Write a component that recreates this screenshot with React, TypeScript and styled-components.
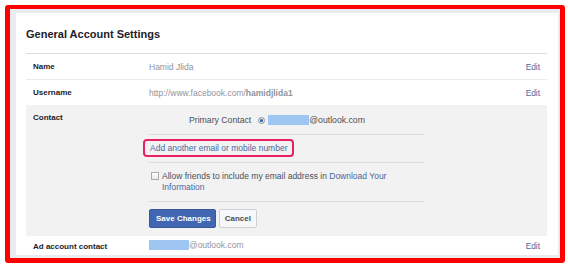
import styled, { createGlobalStyle } from "styled-components"

const GlobalStyle = createGlobalStyle`
  html, body {
    margin: 0;
    padding: 0;
    background: #ffffff;
    font-family: "Liberation Sans", Arial, sans-serif;
  }
`

export default function App() {
  return (
    <>
      <GlobalStyle />
      <Frame>
        <Panel>
          <Title>General Account Settings</Title>

          <Row $border>
            <Label>Name</Label>
            <Value>Hamid Jlida</Value>
            <EditLink>Edit</EditLink>
          </Row>

          <Row>
            <Label>Username</Label>
            <Value>
              http://www.facebook.com/<strong>hamidjlida1</strong>
            </Value>
            <EditLink>Edit</EditLink>
          </Row>

          <ContactSection>
            <ContactLabel>Contact</ContactLabel>
            <ContactBody>
              <Block $pad="8px 0 7px">
                <PrimaryLine>
                  <span>Primary Contact</span>
                  <Radio />
                  <Mask $w={41} />
                  <Email>@outlook.com</Email>
                </PrimaryLine>
              </Block>

              <Block $pad="4px 0 5px">
                <Highlight>Add another email or mobile number</Highlight>
              </Block>

              <Block $pad="8px 0 8px">
                <CheckLine>
                  <CheckBox />
                  <CheckText>
                    Allow friends to include my email address in <Link>Download Your Information</Link>
                  </CheckText>
                </CheckLine>
              </Block>

              <Block $pad="7px 0 8px" $last>
                <Buttons>
                  <PrimaryButton>Save Changes</PrimaryButton>
                  <SecondaryButton>Cancel</SecondaryButton>
                </Buttons>
              </Block>
            </ContactBody>
          </ContactSection>

          <Row $h={20}>
            <Label>Ad account contact</Label>
            <Value>
              <MaskInline>
                <Mask $w={40} />
                <span>@outlook.com</span>
              </MaskInline>
            </Value>
            <EditLink>Edit</EditLink>
          </Row>
        </Panel>
      </Frame>
    </>
  )
}

const Frame = styled.div`
  margin: 5px;
  width: 560px;
  height: 258px;
  box-sizing: border-box;
  border: 5px solid #ff0000;
  border-top-width: 4px;
  border-radius: 3px;
  background: #e9ebee;
  padding: 4px 2px 3px 6px;
  display: flex;
`

const Panel = styled.div`
  flex: 1;
  background: #ffffff;
  padding: 0 11px 0 10px;
  overflow: hidden;
`

const Title = styled.div`
  font-size: 11px;
  font-weight: bold;
  line-height: 14px;
  color: #1d2129;
  padding: 14px 0 12px;
  border-bottom: 1px solid #dadde1;
`

const Row = styled.div<{ $border?: boolean; $h?: number }>`
  display: grid;
  grid-template-columns: 116px 1fr auto;
  align-items: center;
  height: ${p => p.$h ?? 25}px;
  padding: 0 7px;
  border-bottom: ${p => (p.$border ? "1px solid #e9ebee" : "none")};
`

const Label = styled.div`
  font-size: 8px;
  font-weight: bold;
  color: #1d2129;
`

const Value = styled.div`
  font-size: 8.5px;
  color: #90949c;

  strong {
    font-weight: bold;
  }
`

const EditLink = styled.a`
  font-size: 8.3px;
  color: #4b67a1;
  cursor: pointer;
`

const ContactSection = styled.div`
  display: grid;
  grid-template-columns: 116px 275px 1fr;
  background: #f2f2f2;
  padding: 0 7px;
`

const ContactLabel = styled(Label)`
  padding-top: 6px;
  line-height: 14px;
`

const ContactBody = styled.div`
  display: flex;
  flex-direction: column;
`

const Block = styled.div<{ $pad: string; $last?: boolean }>`
  display: flex;
  flex-direction: column;
  align-items: flex-start;
  padding: ${p => p.$pad};
  border-bottom: ${p => (p.$last ? "none" : "1px solid #dadde1")};
`

const PrimaryLine = styled.div`
  display: flex;
  align-items: center;
  height: 14px;
  padding-left: 40px;
  font-size: 8.7px;
  color: #4b4f56;
`

const Radio = styled.span`
  width: 7px;
  height: 7px;
  margin: 0 3px 0 7px;
  border-radius: 50%;
  border: 1px solid #8d949e;
  background: #e4e6eb;
  box-sizing: border-box;
  display: flex;
  align-items: center;
  justify-content: center;

  &::after {
    content: "";
    width: 3px;
    height: 3px;
    border-radius: 50%;
    background: #1f5fa8;
  }
`

const Mask = styled.span<{ $w: number }>`
  display: inline-block;
  width: ${p => p.$w}px;
  height: 10px;
  background: #9fc5f3;
`

const Email = styled.span`
  color: #4b4f56;
`

const MaskInline = styled.span`
  display: inline-flex;
  align-items: center;
`

const Highlight = styled.a`
  display: flex;
  align-items: center;
  margin-left: -6px;
  padding: 0 4px 0 5px;
  height: 18px;
  box-sizing: border-box;
  border: 2px solid #ea1f5f;
  border-radius: 4px;
  font-size: 8.5px;
  color: #4b67a1;
  cursor: pointer;
`

const CheckLine = styled.div`
  display: flex;
  align-items: flex-start;
  padding-left: 2px;
`

const CheckBox = styled.span`
  flex: none;
  width: 8px;
  height: 8px;
  margin-top: 1px;
  box-sizing: border-box;
  border: 1px solid #a8adb5;
  background: linear-gradient(#ffffff, #e9ebee);
`

const CheckText = styled.div`
  margin-left: 3px;
  font-size: 8.5px;
  line-height: 11px;
  color: #4b4f56;
  max-width: 258px;
`

const Link = styled.a`
  color: #4b67a1;
  cursor: pointer;
`

const Buttons = styled.div`
  display: flex;
  gap: 3px;
`

const PrimaryButton = styled.button`
  height: 19px;
  padding: 0 4px 0 6px;
  border: 1px solid #3b5998;
  border-radius: 2px;
  background: #4267b2;
  color: #ffffff;
  font-family: "Liberation Sans", Arial, sans-serif;
  font-size: 8px;
  font-weight: bold;
`

const SecondaryButton = styled.button`
  height: 19px;
  padding: 0 5px;
  border: 1px solid #ced0d4;
  border-radius: 2px;
  background: #f6f7f9;
  color: #4b4f56;
  font-family: "Liberation Sans", Arial, sans-serif;
  font-size: 8px;
  font-weight: bold;
`
